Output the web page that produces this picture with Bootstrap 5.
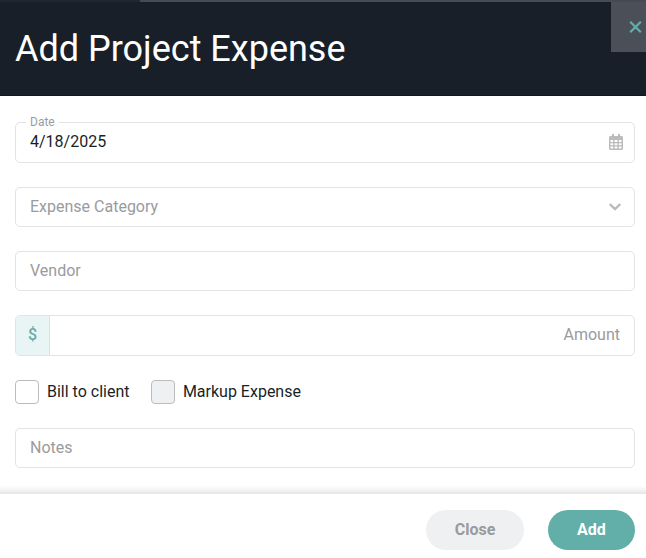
<!DOCTYPE html>
<html lang="en">
<head>
<meta charset="utf-8">
<meta name="viewport" content="width=device-width, initial-scale=1">
<title>Add Project Expense</title>
<link href="https://cdn.jsdelivr.net/npm/bootstrap@5.3.0/dist/css/bootstrap.min.css" rel="stylesheet">
<style>
  body { font-family: Roboto, "Liberation Sans", sans-serif; font-size: 16px; color: #181f28; }
  .expense-head { height: 96px; background: #181f28; border-bottom: 1px solid #101722; }
  .top-strip { height: 2px; background: #444b55; }
  .top-strip-dark { width: 140px; height: 2px; background: #20272f; }
  .expense-title { font-size: 36px; line-height: 44px; padding: 25px 0 0 15px; }
  .close-tile { width: 35px; height: 50px; padding: 0 0 0 18px; background: #4b4f58; }
  .expense-form { height: 398px; padding: 26px 11px 0 15px; background: linear-gradient(to top, #e5e5e5, #f3f3f3 4px, #fff 8px); }
  .field { height: 40px; margin-bottom: 24px; border: 1px solid #e2e3e4; border-radius: 5px; background: #fff; }
  .field-tall { height: 41px; }
  .field .form-control { font-size: 16px; line-height: 24px; padding: 0 14px; color: #181f28; background: transparent; }
  .field .form-control::placeholder { color: #999b9d; opacity: 1; }
  .field .date-input { padding-bottom: 2px; }
  .field .amount-input { padding-bottom: 2px; }
  .float-label { top: -8px; left: 10px; padding: 0 4px; font-size: 12px; line-height: 14px; color: #999b9d; background: #fff; }
  .calendar-icon { margin: 0 11px 1px 0; }
  .chevron-icon { margin-right: 13px; }
  .prefix { width: 34px; background: #e9f5f5; color: #62aea8; border-right: 1px solid #d0e8e6; border-radius: 4px 0 0 4px; font-weight: 500; padding-bottom: 2px; }
  .checks { height: 24px; margin-bottom: 24px; gap: 21.400px; }
  .checks .form-check-input { width: 24px; height: 24px; border: 1px solid #babcc0; border-radius: 4px; margin: 0 8px 0 0; }
  .checks .form-check-input:disabled { background: #eff0f2; opacity: 1; }
  .checks .form-check-label { opacity: 1 !important; line-height: 24px; }
  .expense-foot { height: 64px; padding: 16px 11px 0 0; gap: 24px; }
  .expense-foot .btn { height: 40px; border: 0; font-size: 16px; font-weight: 700; padding: 0; }
  .btn-dismiss, .btn-dismiss:hover { width: 98px; background: #eff0f2; color: #999b9d; }
  .btn-add, .btn-add:hover { width: 87px; background: #62aea8; color: #fff; }
</style>
<script src="https://cdn.jsdelivr.net/npm/bootstrap@5.3.0/dist/js/bootstrap.bundle.min.js"></script>
</head>
<body class="bg-white overflow-hidden">
<header class="expense-head">
  <div class="top-strip"><div class="top-strip-dark"></div></div>
  <div class="d-flex justify-content-between align-items-start">
    <h1 class="expense-title fw-normal text-white m-0">Add Project Expense</h1>
    <button class="close-tile border-0 d-flex align-items-center" type="button" aria-label="Dismiss">
      <svg class="flex-shrink-0" width="13" height="12" viewBox="0 0 13 12" fill="none" stroke="#62aea8" stroke-width="2.200"><path d="M1.200 .8 11.800 11.200M11.800 .8 1.200 11.200"/></svg>
    </button>
  </div>
</header>
<form class="expense-form">
  <div class="field field-tall position-relative d-flex align-items-center">
    <label class="float-label position-absolute" for="date">Date</label>
    <input id="date" class="date-input form-control border-0 shadow-none" type="text" value="4/18/2025">
    <svg class="calendar-icon flex-shrink-0" width="14" height="16" viewBox="0 0 14 16"><path fill="#b9bbbd" fill-rule="evenodd" d="M3 0h2v2h4V0h2v2h1.500A1.500 1.500 0 0 1 14 3.500V14.500A1.500 1.500 0 0 1 12.500 16H1.500A1.500 1.500 0 0 1 0 14.500V3.500A1.500 1.500 0 0 1 1.500 2H3ZM1.500 6v2h2.700V6ZM5.600 6v2h2.800V6ZM9.800 6v2h2.700V6ZM1.500 9.200v2h2.700v-2ZM5.600 9.200v2h2.800v-2ZM9.800 9.200v2h2.700v-2ZM1.500 12.500v2h2.700v-2ZM5.600 12.500v2h2.800v-2ZM9.800 12.500v2h2.700v-2Z"/></svg>
  </div>
  <div class="field d-flex align-items-center">
    <input class="form-control border-0 shadow-none" type="text" placeholder="Expense Category" aria-label="Expense Category">
    <svg class="chevron-icon flex-shrink-0" width="12" height="8" viewBox="0 0 12 8" fill="none" stroke="#b9bbbd" stroke-width="2.400"><path d="M.8 1 6 6 11.200 1"/></svg>
  </div>
  <div class="field d-flex align-items-center">
    <input class="form-control border-0 shadow-none" type="text" placeholder="Vendor" aria-label="Vendor">
  </div>
  <div class="field field-tall d-flex align-items-center">
    <span class="prefix h-100 d-flex align-items-center justify-content-center flex-shrink-0">$</span>
    <input class="amount-input form-control border-0 shadow-none text-end" type="text" placeholder="Amount" aria-label="Amount">
  </div>
  <div class="checks d-flex align-items-center">
    <div class="d-flex align-items-center">
      <input class="form-check-input" type="checkbox" id="bill"><label class="form-check-label" for="bill">Bill to client</label>
    </div>
    <div class="d-flex align-items-center">
      <input class="form-check-input" type="checkbox" id="markup" disabled><label class="form-check-label" for="markup">Markup Expense</label>
    </div>
  </div>
  <div class="field d-flex align-items-center">
    <input class="form-control border-0 shadow-none" type="text" placeholder="Notes" aria-label="Notes">
  </div>
</form>
<footer class="expense-foot bg-white d-flex justify-content-end">
  <button class="btn btn-dismiss rounded-pill" type="button">Close</button>
  <button class="btn btn-add rounded-pill" type="button">Add</button>
</footer>
</body>
</html>
